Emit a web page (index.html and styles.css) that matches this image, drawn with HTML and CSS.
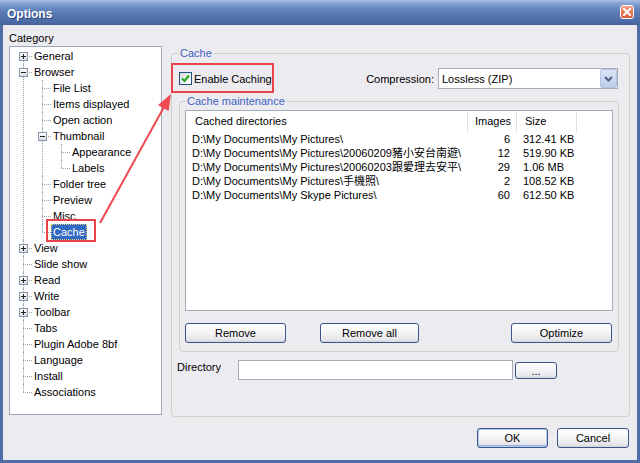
FILE: index.html
```html
<!DOCTYPE html>
<html lang="en">
<head>
    <meta charset="UTF-8">
    <title>Options</title>
    <link rel="stylesheet" href="styles.css">
</head>
<body>
    <div class="window">
        <div class="titlebar">
            <span class="title">Options</span>
            <span class="close">
                <svg width="12" height="12" viewBox="0 0 12 12"><path d="M3 3 L9 9 M9 3 L3 9" stroke="#fff" stroke-width="2" stroke-linecap="square"/></svg>
            </span>
        </div>
        <div class="client">
            <div class="main">
                <div class="left">
                    <div class="cat-label">Category</div>
                    <div class="tree">
                        <ul>
                            <li><span class="tog plus"></span><span class="lbl">General</span></li>
                            <li><span class="tog minus"></span><span class="lbl">Browser</span>
                                <ul>
                                    <li><span class="lbl">File List</span></li>
                                    <li><span class="lbl">Items displayed</span></li>
                                    <li><span class="lbl">Open action</span></li>
                                    <li><span class="tog minus"></span><span class="lbl">Thumbnail</span>
                                        <ul>
                                            <li><span class="lbl">Appearance</span></li>
                                            <li><span class="lbl">Labels</span></li>
                                        </ul>
                                    </li>
                                    <li><span class="lbl">Folder tree</span></li>
                                    <li><span class="lbl">Preview</span></li>
                                    <li><span class="lbl">Misc.</span></li>
                                    <li><span class="lbl sel">Cache</span></li>
                                </ul>
                            </li>
                            <li><span class="tog plus"></span><span class="lbl">View</span></li>
                            <li><span class="lbl">Slide show</span></li>
                            <li><span class="tog plus"></span><span class="lbl">Read</span></li>
                            <li><span class="tog plus"></span><span class="lbl">Write</span></li>
                            <li><span class="tog plus"></span><span class="lbl">Toolbar</span></li>
                            <li><span class="lbl">Tabs</span></li>
                            <li><span class="lbl">Plugin Adobe 8bf</span></li>
                            <li><span class="lbl">Language</span></li>
                            <li><span class="lbl">Install</span></li>
                            <li><span class="lbl">Associations</span></li>
                        </ul>
                    </div>
                </div>

                <fieldset class="group cache">
                    <legend>Cache</legend>
                    <div class="cache-top">
                        <label class="check">
                            <span class="checkbox">
                                <svg width="11" height="11" viewBox="0 0 11 11"><path d="M2 5.5 L4.5 8 L9 2.5" fill="none" stroke="#21a121" stroke-width="2"/></svg>
                            </span>
                            Enable Caching
                        </label>
                        <div class="compression">
                            <span>Compression:</span>
                            <div class="combo">
                                <span>Lossless (ZIP)</span>
                                <span class="combo-btn">
                                    <svg width="9" height="6" viewBox="0 0 9 6"><path d="M1 1 L4.5 4.5 L8 1" fill="none" stroke="#4d6185" stroke-width="2"/></svg>
                                </span>
                            </div>
                        </div>
                    </div>

                    <fieldset class="group maint">
                        <legend>Cache maintenance</legend>
                        <div class="list">
                            <div class="list-head">
                                <div class="h-path">Cached directories</div>
                                <div class="h-img">Images</div>
                                <div class="h-size">Size</div>
                                <div></div>
                            </div>
                            <div class="row"><span class="c-path">D:\My Documents\My Pictures\</span><span class="c-img">6</span><span class="c-size">312.41 KB</span></div>
                            <div class="row"><span class="c-path">D:\My Documents\My Pictures\20060209豬小安台南遊\</span><span class="c-img">12</span><span class="c-size">519.90 KB</span></div>
                            <div class="row"><span class="c-path">D:\My Documents\My Pictures\20060203跟愛理去安平\</span><span class="c-img">29</span><span class="c-size">1.06 MB</span></div>
                            <div class="row"><span class="c-path">D:\My Documents\My Pictures\手機照\</span><span class="c-img">2</span><span class="c-size">108.52 KB</span></div>
                            <div class="row"><span class="c-path">D:\My Documents\My Skype Pictures\</span><span class="c-img">60</span><span class="c-size">612.50 KB</span></div>
                        </div>
                        <div class="list-buttons">
                            <button class="btn btn-remove">Remove</button>
                            <button class="btn btn-remove-all">Remove all</button>
                            <button class="btn btn-optimize">Optimize</button>
                        </div>
                    </fieldset>

                    <div class="dir-row">
                        <span class="dir-label">Directory</span>
                        <div class="dir-input"></div>
                        <button class="btn btn-browse">...</button>
                    </div>
                </fieldset>
            </div>

            <div class="footer">
                <button class="btn btn-ok">OK</button>
                <button class="btn btn-cancel">Cancel</button>
            </div>
        </div>

        <!-- annotation marks drawn over the dialog -->
        <div class="mark mark-cache"></div>
        <div class="mark mark-enable"></div>
        <svg class="arrow" width="640" height="463" viewBox="0 0 640 463">
            <line x1="100" y1="223" x2="164" y2="107" stroke="#ef4a4f" stroke-width="2"/>
            <polygon points="171,94 168.6,110.9 158,105.1" fill="#ef4a4f"/>
        </svg>
    </div>
</body>
</html>
```

FILE: styles.css
```css
* {
    box-sizing: border-box;
}

body {
    margin: 0;
    font-family: "Liberation Sans", "Noto Sans CJK TC", sans-serif;
    font-size: 11px;
    color: #000;
    background: #fff;
    overflow: hidden;
}

.window {
    width: 640px;
    height: 463px;
    display: flex;
    flex-direction: column;
    background: #4f6da8;
    position: relative;
    overflow: hidden;
}

.titlebar {
    height: 25px;
    flex: none;
    display: flex;
    justify-content: space-between;
    align-items: flex-start;
    padding: 0 6px 0 7px;
    background: linear-gradient(to bottom, #a8c0e4 0, #8aa6d4 3px, #6888c0 8px, #5878b3 14px, #4e6ca8 21px, #45619b 25px);
}

.title {
    color: #fff;
    font-weight: bold;
    font-size: 12px;
    line-height: 14px;
    margin-top: 7px;
    text-shadow: 1px 1px 0 #2c4478;
}

.close {
    width: 14px;
    height: 14px;
    margin-top: 5px;
    border: 1px solid #fff;
    border-radius: 3px;
    background: linear-gradient(#f2a084, #d9552f);
    display: flex;
    align-items: center;
    justify-content: center;
}

.client {
    flex: 1;
    margin: 0 3px 3px;
    background: #ecebf0;
    display: flex;
    flex-direction: column;
}

.main {
    display: flex;
    padding: 5px 0 0 6px;
}

.left {
    width: 153px;
    flex: none;
}

.cat-label {
    height: 16px;
    line-height: 16px;
}

/* category tree */
.tree {
    height: 369px;
    background: #fff;
    border: 1px solid #9da7b5;
    padding: 1px 0 0 13px;
}

.tree ul {
    list-style: none;
    margin: 0;
    padding: 0;
}

.tree li {
    position: relative;
    padding-left: 9px;
    line-height: 16px;
    white-space: nowrap;
}

.tree li::before {
    content: "";
    position: absolute;
    left: 0;
    top: 8px;
    width: 9px;
    border-top: 1px dotted #a0a0a0;
}

.tree li::after {
    content: "";
    position: absolute;
    left: 0;
    top: 0;
    bottom: 0;
    border-left: 1px dotted #a0a0a0;
}

.tree li:last-child::after {
    bottom: auto;
    height: 8px;
}

.tree > ul > li:first-child::after {
    top: 8px;
}

.tree li ul {
    margin-left: 10px;
}

.lbl {
    display: inline-block;
    padding: 0 2px;
}

.lbl.sel {
    background: #316ac5;
    color: #fff;
    outline: 1px dotted #e6c878;
    outline-offset: -1px;
}

.tog {
    position: absolute;
    left: -4px;
    top: 4px;
    width: 9px;
    height: 9px;
    border: 1px solid #8696ae;
    background: linear-gradient(#fff, #d5dae3);
    z-index: 1;
}

.tog::before {
    content: "";
    position: absolute;
    left: 1px;
    top: 3px;
    width: 5px;
    height: 1px;
    background: #222;
}

.tog.plus::after {
    content: "";
    position: absolute;
    left: 3px;
    top: 1px;
    width: 1px;
    height: 5px;
    background: #222;
}

/* group boxes */
fieldset.group {
    margin: 0;
    border: 1px solid #d0d0c8;
    border-radius: 4px;
    min-width: 0;
}

.group legend {
    padding: 0 1px;
    color: #3f62c0;
    font-size: 11px;
    line-height: 13px;
}

fieldset.cache {
    width: 459px;
    height: 370px;
    margin: 17px 0 0 9px;
    padding: 8px 10px 0 7px;
}

.cache-top {
    display: flex;
    align-items: center;
    justify-content: space-between;
    height: 21px;
}

.check {
    display: flex;
    align-items: center;
    gap: 2px;
}

.checkbox {
    width: 13px;
    height: 13px;
    border: 1px solid #1c5180;
    background: linear-gradient(135deg, #dcdcd7, #fff);
    display: flex;
    align-items: center;
    justify-content: center;
}

.compression {
    display: flex;
    align-items: center;
    gap: 4px;
    margin-right: 1px;
}

.combo {
    width: 180px;
    height: 21px;
    border: 1px solid #a5acb5;
    background: #fff;
    display: flex;
    align-items: center;
    padding-left: 3px;
}

.combo-btn {
    margin-left: auto;
    width: 17px;
    height: 19px;
    border: 1px solid #b4c4e2;
    border-radius: 2px;
    background: linear-gradient(#dbe4f6, #bccbea);
    display: flex;
    align-items: center;
    justify-content: center;
}

fieldset.maint {
    margin-top: 6px;
    padding: 2px 5px 8px 5px;
}

.maint legend {
    padding: 0 2px;
}

/* directory list */
.list {
    height: 201px;
    border: 1px solid #a5acb5;
    background: #fff;
}

.list-head,
.row {
    display: grid;
    grid-template-columns: 282px 49px 60px 1fr;
}

.list-head {
    height: 21px;
    padding-top: 1px;
}

.list-head div {
    line-height: 19px;
    border-right: 1px solid #e0e0e4;
}

.list-head div:last-child {
    border-right: none;
}

.h-path {
    padding-left: 9px;
}

.h-img {
    padding-left: 7px;
}

.h-size {
    padding-left: 8px;
}

.row {
    line-height: 14px;
    white-space: nowrap;
}

.c-path {
    padding-left: 6px;
    overflow: hidden;
}

.c-img {
    text-align: right;
    padding-right: 7px;
}

.c-size {
    padding-left: 6px;
}

/* buttons */
.btn {
    height: 20px;
    padding: 0;
    border: 1px solid #3c5488;
    border-radius: 3px;
    background: linear-gradient(#ffffff 0%, #f5f5f7 45%, #e6e6eb 85%, #d3d4dc 100%);
    font-family: inherit;
    font-size: 11px;
    color: #000;
}

.list-buttons {
    display: flex;
    margin-top: 12px;
}

.btn-remove {
    width: 101px;
}

.btn-remove-all {
    width: 99px;
    margin-left: 34px;
}

.btn-optimize {
    width: 101px;
    margin-left: auto;
    margin-right: 1px;
}

.dir-row {
    display: flex;
    margin: 8px 0 0 -2px;
}

.dir-label {
    width: 61px;
    line-height: 14px;
}

.dir-input {
    width: 275px;
    height: 20px;
    border: 1px solid #a5acb5;
    background: #fff;
}

.btn-browse {
    width: 42px;
    height: 17px;
    margin: 2px 0 0 2px;
    line-height: 10px;
}

.footer {
    display: flex;
    justify-content: flex-end;
    gap: 9px;
    margin-top: 11px;
    padding-right: 8px;
}

.btn-ok {
    width: 71px;
    box-shadow: inset 0 0 0 1px #b6ccee, inset 0 -1px 0 1px #8fb0e6;
}

.btn-cancel {
    width: 72px;
}

/* annotations */
.mark {
    position: absolute;
    border: 2px solid #e8434a;
}

.mark-cache {
    left: 46px;
    top: 219px;
    width: 50px;
    height: 23px;
}

.mark-enable {
    left: 171px;
    top: 63px;
    width: 103px;
    height: 30px;
}

.arrow {
    position: absolute;
    left: 0;
    top: 0;
    pointer-events: none;
}
```
